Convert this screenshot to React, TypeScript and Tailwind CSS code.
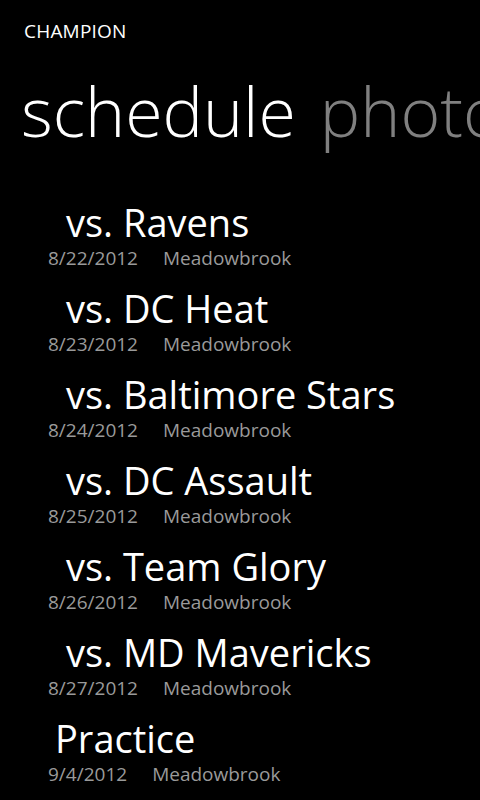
const games = [
  { title: "vs. Ravens", date: "8/22/2012", place: "Meadowbrook", indent: "pl-[66px]" },
  { title: "vs. DC Heat", date: "8/23/2012", place: "Meadowbrook", indent: "pl-[66px]" },
  { title: "vs. Baltimore Stars", date: "8/24/2012", place: "Meadowbrook", indent: "pl-[66px]" },
  { title: "vs. DC Assault", date: "8/25/2012", place: "Meadowbrook", indent: "pl-[66px]" },
  { title: "vs. Team Glory", date: "8/26/2012", place: "Meadowbrook", indent: "pl-[66px]" },
  { title: "vs. MD Mavericks", date: "8/27/2012", place: "Meadowbrook", indent: "pl-[66px]" },
  { title: "Practice", date: "9/4/2012", place: "Meadowbrook", indent: "pl-[55px]" },
];

export default function App() {
  return (
    <div
      className="w-[480px] h-[800px] overflow-hidden bg-black text-white"
      style={{ fontFamily: '"Open Sans", "Noto Sans", sans-serif' }}
    >
      <header className="pl-6 pt-[19px]">
        <div className="text-[19px] leading-6 tracking-[0.2px]">CHAMPION</div>
      </header>

      {/* pivot headers, next one peeks in from the right */}
      <div className="flex gap-[24px] pl-[21px] mt-[32px] whitespace-nowrap font-light text-[68px] leading-[72px]">
        <span>schedule</span>
        <span className="text-[#808080]">photos</span>
      </div>

      <ul className="mt-[53px]">
        {games.map((g) => (
          <li key={g.title} className="h-[86px]">
            <div className={`${g.indent} text-[38px] leading-[44px]`}>{g.title}</div>
            <div className="pl-12 mt-[3px] flex gap-[25px] text-[19px] leading-[22px] text-[#9a9a9a]">
              <span>{g.date}</span>
              <span>{g.place}</span>
            </div>
          </li>
        ))}
      </ul>
    </div>
  );
}
